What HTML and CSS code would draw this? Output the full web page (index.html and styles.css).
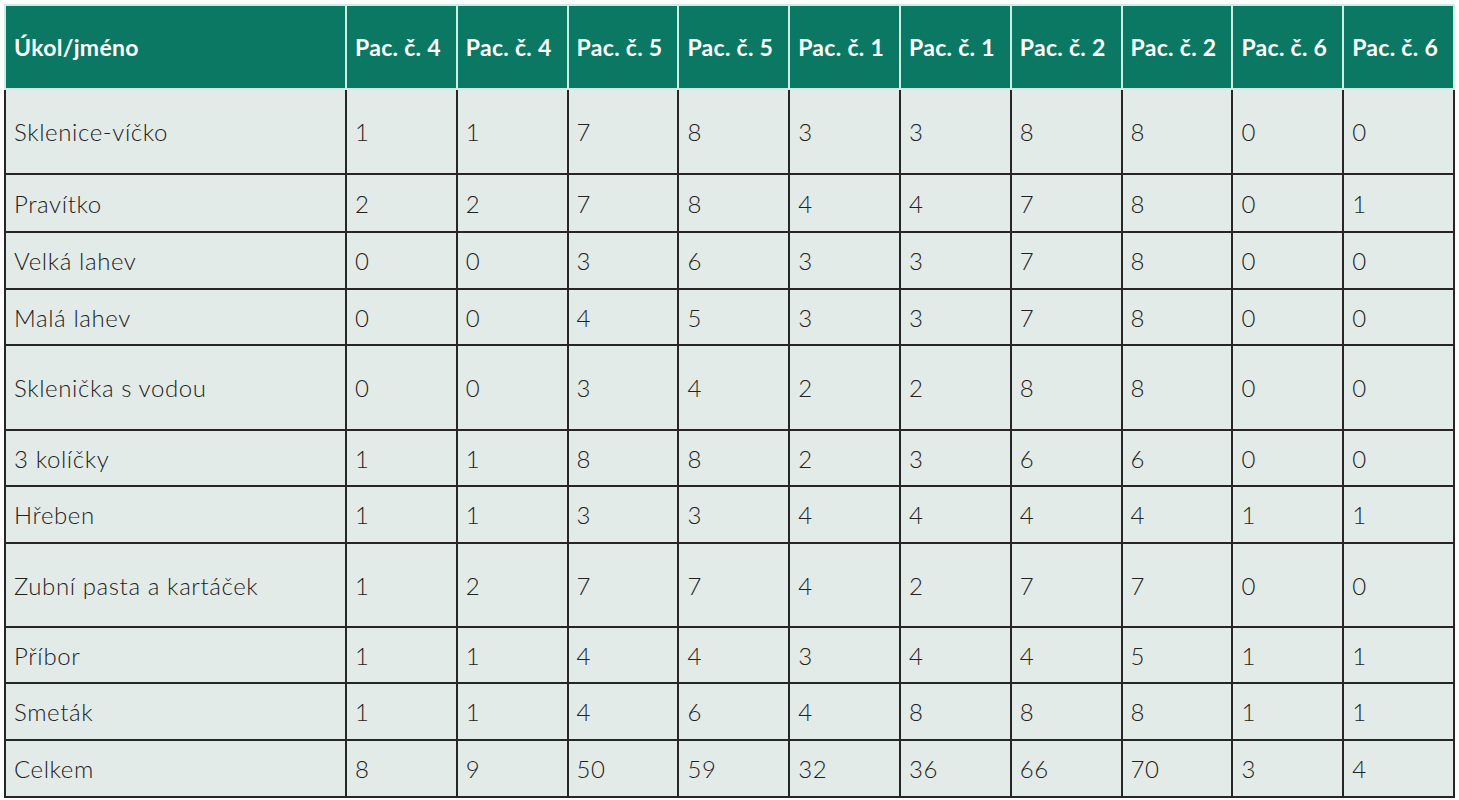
FILE: index.html
```html
<!DOCTYPE html>
<html lang="cs">
<head>
<meta charset="utf-8">
<title>Tabulka</title>
<link rel="stylesheet" href="styles.css">
</head>
<body>
<table class="data">
  <colgroup>
    <col class="c-name">
    <col span="10" class="c-val">
  </colgroup>
  <thead>
    <tr>
      <th>Úkol/jméno</th>
      <th>Pac. č. 4</th><th>Pac. č. 4</th><th>Pac. č. 5</th><th>Pac. č. 5</th><th>Pac. č. 1</th>
      <th>Pac. č. 1</th><th>Pac. č. 2</th><th>Pac. č. 2</th><th>Pac. č. 6</th><th>Pac. č. 6</th>
    </tr>
  </thead>
  <tbody>
    <tr class="tall"><td>Sklenice-víčko</td><td>1</td><td>1</td><td>7</td><td>8</td><td>3</td><td>3</td><td>8</td><td>8</td><td>0</td><td>0</td></tr>
    <tr class="r1"><td>Pravítko</td><td>2</td><td>2</td><td>7</td><td>8</td><td>4</td><td>4</td><td>7</td><td>8</td><td>0</td><td>1</td></tr>
    <tr class="r2"><td>Velká lahev</td><td>0</td><td>0</td><td>3</td><td>6</td><td>3</td><td>3</td><td>7</td><td>8</td><td>0</td><td>0</td></tr>
    <tr class="r3"><td>Malá lahev</td><td>0</td><td>0</td><td>4</td><td>5</td><td>3</td><td>3</td><td>7</td><td>8</td><td>0</td><td>0</td></tr>
    <tr class="tall"><td>Sklenička s vodou</td><td>0</td><td>0</td><td>3</td><td>4</td><td>2</td><td>2</td><td>8</td><td>8</td><td>0</td><td>0</td></tr>
    <tr class="r3"><td>3 kolíčky</td><td>1</td><td>1</td><td>8</td><td>8</td><td>2</td><td>3</td><td>6</td><td>6</td><td>0</td><td>0</td></tr>
    <tr class="r2"><td>Hřeben</td><td>1</td><td>1</td><td>3</td><td>3</td><td>4</td><td>4</td><td>4</td><td>4</td><td>1</td><td>1</td></tr>
    <tr class="tall2"><td>Zubní pasta a kartáček</td><td>1</td><td>2</td><td>7</td><td>7</td><td>4</td><td>2</td><td>7</td><td>7</td><td>0</td><td>0</td></tr>
    <tr class="r3"><td>Příbor</td><td>1</td><td>1</td><td>4</td><td>4</td><td>3</td><td>4</td><td>4</td><td>5</td><td>1</td><td>1</td></tr>
    <tr class="r2"><td>Smeták</td><td>1</td><td>1</td><td>4</td><td>6</td><td>4</td><td>8</td><td>8</td><td>8</td><td>1</td><td>1</td></tr>
    <tr class="r2"><td>Celkem</td><td>8</td><td>9</td><td>50</td><td>59</td><td>32</td><td>36</td><td>66</td><td>70</td><td>3</td><td>4</td></tr>
  </tbody>
</table>
</body>
</html>
```

FILE: styles.css
```css
html, body {
  background: #ffffff;
}
body {
  margin: 4px;
  font-family: Lato, "Open Sans", "Liberation Sans", sans-serif;
}
.data {
  border-collapse: collapse;
  table-layout: fixed;
  width: 1449px;
}
.c-name { width: 341px; }
.c-val { width: 110.8px; }

.data th {
  background: #0a7862;
  color: #ffffff;
  font-weight: 700;
  font-size: 23px;
  text-align: left;
  height: 84px;
  padding: 0 0 0 8px;
  border: 2px solid #cdeee5;
  box-sizing: border-box;
  letter-spacing: 0.3px;
  white-space: nowrap;
}
.data td {
  background: #e3ebe8;
  color: #222222;
  font-size: 24px;
  font-weight: 300;
  text-align: left;
  padding: 0 0 0 8px;
  border: 2px solid #262626;
  box-sizing: border-box;
  white-space: nowrap;
  letter-spacing: 0.6px;
}
.tall td { height: 85px; }
.tall2 td { height: 84px; }
.r1 td { height: 58px; }
.r2 td { height: 57px; }
.r3 td { height: 56px; }
```
